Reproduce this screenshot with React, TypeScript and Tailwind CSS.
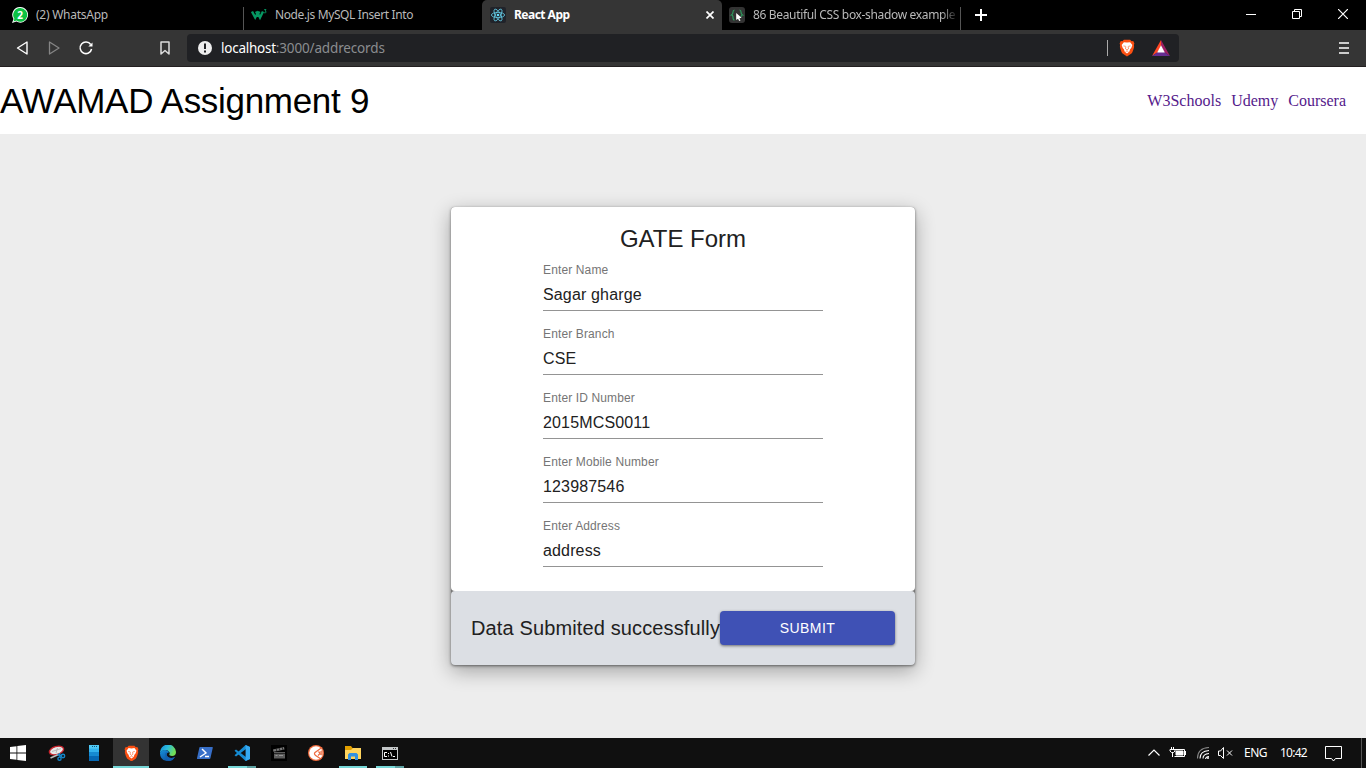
import type { ReactNode } from "react";
import { useState } from "react";

const ui = "font-['Noto_Sans',sans-serif]";
const sans = "font-['Liberation_Sans',Arial,sans-serif]";

function WhatsAppIcon() {
  return (
    <svg width="16" height="16" viewBox="0 0 16 16" className="shrink-0">
      <path d="M8.200 0A7.800 7.800 0 1 1 4.400 14.600L0 16L1.500 12A7.800 7.800 0 0 1 8.200 0Z" fill="#fff" />
      <path d="M8.200 1A6.900 6.900 0 1 1 4.500 13.600L1.500 14.500L2.400 11.800A6.900 6.900 0 0 1 8.200 1Z" fill="#0cc143" />
      <text x="8.200" y="11.700" fontSize="10" fontWeight="700" fill="#fff" textAnchor="middle" fontFamily="Noto Sans">2</text>
    </svg>
  );
}

function W3Icon() {
  return (
    <svg width="16" height="16" viewBox="0 0 16 16" fill="none" stroke="#059862" className="shrink-0">
      <path d="M1 4.500L4.200 10.500L6.700 6L9 10.500L12 4.500M5 4.500L6.700 7.500L8.500 4.500" strokeWidth="2.400" />
      <path d="M13.200 2.500H15L14 4Q15.300 4 15 5.200T13.100 5.700" strokeWidth=".9" />
    </svg>
  );
}

function ReactIcon() {
  return (
    <svg width="16" height="16" viewBox="0 0 16 16" className="shrink-0">
      <rect width="16" height="16" rx="2" fill="#20232a" />
      <g fill="none" stroke="#61c5de" strokeWidth=".85">
        <ellipse cx="8" cy="8" rx="6.600" ry="2.600" />
        <ellipse cx="8" cy="8" rx="6.600" ry="2.600" transform="rotate(60 8 8)" />
        <ellipse cx="8" cy="8" rx="6.600" ry="2.600" transform="rotate(120 8 8)" />
      </g>
      <circle cx="8" cy="8" r="1.300" fill="#61dafb" />
    </svg>
  );
}

function CssScanIcon() {
  return (
    <svg width="16" height="16" viewBox="0 0 16 16" className="shrink-0">
      <rect width="16" height="16" rx="3" fill="#333" />
      <path d="M5.500 3Q4 3 4 5T2.500 8Q4 8 4 10.500T5.500 13M10.500 3Q12 3 12 5T13.500 8Q12 8 12 10" fill="none" stroke="#2d9a5c" strokeWidth="1.200" />
      <path d="M7.200 6V13L9 11.700L10.200 14L11.500 13.400L10.400 11.200L12.600 10.800Z" fill="#fff" />
    </svg>
  );
}

function BraveIcon({ size }: { size: number }) {
  return (
    <svg width={size} height={size * 1.12} viewBox="0 0 18 20" className="shrink-0">
      <path d="M5.500 .8H12.500L14.200 2.500L16 2.300L17.300 5L16.800 6.500L17 9Q15.500 15 14 16.300L9 19.700L4 16.300Q2.500 15 1 9L1.200 6.500L.7 5L2 2.300L3.800 2.500Z" fill="#fb4f12" />
      <path d="M9 4L12.500 3.500L15 6.800L13.800 10L12.500 11.500L11.700 14L9 16.200L6.300 14L5.500 11.500L4.200 10L3 6.800L5.500 3.500Z" fill="#fff" />
      <path d="M5 7.700L7.500 8.200M13 7.700L10.500 8.200M7.700 8.500L7.300 11L9 12.300L10.700 11L10.300 8.500M7.500 14L9 13.300L10.500 14" fill="none" stroke="#fb4f12" strokeOpacity=".75" strokeWidth=".9" />
    </svg>
  );
}

function BatIcon() {
  return (
    <svg width="18" height="16" viewBox="0 0 18 16" className="shrink-0">
      <path d="M9 0L0 16L6 12L9 6Z" fill="#ff4724" />
      <path d="M9 0L18 16L12 12L9 6Z" fill="#9e1f63" />
      <path d="M0 16H18L12 12H6Z" fill="#662d91" />
      <path d="M9 5.300L12.800 12.500H5.200Z" fill="#fff" />
    </svg>
  );
}

function WindowsIcon() {
  return (
    <svg width="16" height="16" viewBox="0 0 16 16" fill="#fff">
      <path d="M0 2.100L6.500 1.200V7.500H0ZM7.300 1.100L16 0V7.500H7.300ZM0 8.400H6.500V14.800L0 13.900ZM7.300 8.400H16V16L7.300 14.900Z" />
    </svg>
  );
}

function SnipIcon() {
  return (
    <svg width="18" height="16" viewBox="0 0 18 16">
      <ellipse cx="8.500" cy="5.500" rx="7.300" ry="4" transform="rotate(-16 8.500 5.500)" fill="#e8e8e8" stroke="#c9242d" strokeWidth="1.400" />
      <path d="M4 6.500L13 3.600M9.500 3L8 8" stroke="#a5a5a5" strokeWidth=".7" />
      <path d="M2.500 13L10.500 9.500" stroke="#bbb" strokeWidth="1.500" />
      <g fill="none" stroke="#1684c7" strokeWidth="1.400">
        <path d="M9.500 9.500L14 11M11.500 8L12 12" />
        <circle cx="15" cy="11" r="1.700" /><circle cx="11.500" cy="13.700" r="1.600" />
      </g>
    </svg>
  );
}

function PhoneIcon() {
  return (
    <svg width="10" height="16" viewBox="0 0 10 16">
      <path d="M0 0H10V5H0Z" fill="#50c9f4" /><path d="M0 3.500H10V7H0Z" fill="#32b2ed" />
      <path d="M0 7H10V11H0Z" fill="#168bd2" /><path d="M0 11H10V16H0Z" fill="#0669b5" />
      <path d="M3 1.500H4M5 1.500H6M7 1.500H8" stroke="#075985" />
    </svg>
  );
}

function EdgeIcon() {
  return (
    <svg width="16" height="16" viewBox="0 0 16 16">
      <defs>
        <linearGradient id="edgeTop" x1="0" x2="1" y2=".4"><stop stopColor="#1686d9" /><stop offset=".5" stopColor="#2bbcdc" /><stop offset="1" stopColor="#72df55" /></linearGradient>
        <linearGradient id="edgeLow" x2=".7" y2="1"><stop stopColor="#1691db" /><stop offset="1" stopColor="#0c4c9b" /></linearGradient>
      </defs>
      <path d="M0 8A8 8 0 0 1 16 7Q16 11 12 11Q9 11 9.200 9.700Q10 8.700 9.500 7.200Q8 4.800 4.800 5Q1.500 5.300 0 8Z" fill="url(#edgeTop)" />
      <path d="M0 8Q1.500 4.800 5.300 5Q8.500 5.200 9.200 7.200Q6.500 7.500 6.700 10Q8 13.500 12 13Q14 12.700 15 12A8 8 0 0 1 0 8Z" fill="url(#edgeLow)" />
      <path d="M5.500 8Q4.200 12.500 8.500 15.800Q13 15.500 15 12Q11 14.200 8 12Q5.800 10.500 7 7.500Q6 7.200 5.500 8Z" fill="#135eaf" />
    </svg>
  );
}

function PowerShellIcon() {
  return (
    <svg width="16" height="12" viewBox="0 0 16 12">
      <path d="M3 0H15.300Q16 0 15.800 .8L13.400 11.200Q13.200 12 12.500 12H.5Q-.2 12 0 11.200L2.400 .6Q2.500 0 3 0Z" fill="#376fc8" />
      <path d="M5 2L9 6L3 10M8 9.500H12" fill="none" stroke="#fff" strokeWidth="1.400" />
    </svg>
  );
}

function CodeIcon() {
  return (
    <svg width="16" height="16" viewBox="0 0 16 16">
      <path d="M11.600 0L16 2V14L11.600 16L.5 5.800L2 4.500L12 12V4L2 11.500L.5 10.200Z" fill="#168bd2" />
      <path d="M11.600 0L16 2V14L11.600 16Z" fill="#35a9f1" />
    </svg>
  );
}

function ClapperIcon() {
  return (
    <svg width="16" height="16" viewBox="0 0 16 16">
      <path d="M0 0H16V16H0Z" fill="#000" />
      <path d="M2 4.500L13 2L13.500 4.500L2.500 6.800Z" fill="#777" />
      <path d="M3 7H14V13.500H3Z" fill="#5c5c5c" />
      <path d="M5 3.500L6 6.500M8 3L9 5.500M11 2L12 5M3 8.500H14" stroke="#191919" strokeWidth=".8" />
      <path d="M4.500 10.500H6.500M8 10.500H12" stroke="#999" strokeWidth=".9" />
    </svg>
  );
}

function BallIcon() {
  return (
    <svg width="16" height="16" viewBox="0 0 16 16">
      <circle cx="8" cy="8" r="8" fill="#ef6b3d" /><circle cx="8" cy="8" r="6.800" fill="#fff" />
      <path d="M14 2.500L7 7.500Q5.500 9 8 10.700L13 14M10.500 6.500L12.200 8.500L10 10.500" fill="none" stroke="#ed6a3e" strokeWidth="1.200" />
      <path d="M12.300 6L14.800 5V10.500L12 10Z" fill="#ef8b69" />
    </svg>
  );
}

function FolderIcon() {
  return (
    <svg width="16" height="14" viewBox="0 0 16 14">
      <path d="M0 0H6L7.500 2H16V13H0Z" fill="#e3a000" /><path d="M0 4H6L8 2H16V13H0Z" fill="#ffd45d" />
      <path d="M3 14V8.500L4.500 7H11.500L13 8.500V14H10V10.500H6V14Z" fill="#3291e2" />
    </svg>
  );
}

function TerminalIcon() {
  return (
    <svg width="16" height="13" viewBox="0 0 16 13">
      <path d="M0 0H16V13H0Z" fill="#c4c7c9" /><path d="M1 3H15V12H1Z" fill="#000" />
      <path d="M11 1.500H12M13 1.500H14" stroke="#333" />
      <path d="M5 5.500H2.500V9.500H5M6.500 6V7M6.500 8.500V9.500M8.500 5L10 9.500M11 9.500H13" fill="none" stroke="#fff" />
    </svg>
  );
}

type Tab = { title: string; width: string; icon: ReactNode; active?: boolean; tracking: string };

const tabs: Tab[] = [
  { title: "(2) WhatsApp", width: "w-[243px] pl-3", icon: <WhatsAppIcon />, tracking: "tracking-[-0.25px]" },
  { title: "Node.js MySQL Insert Into", width: "w-[239px] pl-2", icon: <W3Icon />, tracking: "tracking-[-0.38px]" },
  { title: "React App", width: "w-[240px] pl-2", icon: <ReactIcon />, active: true, tracking: "tracking-[-0.52px]" },
  { title: "86 Beautiful CSS box-shadow example", width: "w-[239px] pl-[7px]", icon: <CssScanIcon />, tracking: "tracking-[-0.34px]" },
];

function TabStrip() {
  return (
    <div className="flex h-[30px] bg-black text-xs">
      {tabs.map((tab, i) => (
        <div
          key={tab.title}
          className={`flex items-center ${tab.width} ${tab.active ? "rounded-t-[5px] bg-[#353535] font-bold text-white" : "text-[#b9b9b9]"}`}
        >
          {tab.icon}
          <span className={`ml-2 whitespace-nowrap leading-5 ${tab.tracking} ${i === 3 ? "w-[204px] [mask-image:linear-gradient(to_right,black_188px,transparent_206px)]" : ""}`}>
            {tab.title}
          </span>
          {i === 0 && <span className="ml-auto mt-[7px] h-[23px] w-px translate-x-px bg-[#555]" />}
          {i === 3 && <span className="ml-auto mt-[7px] h-[23px] w-px bg-[#555]" />}
          {tab.active && (
            <svg width="8" height="8" viewBox="0 0 8 8" className="ml-auto mr-2" stroke="#fff" strokeWidth="1.700">
              <path d="M.5 .5L7.500 7.500M7.500 .5L.5 7.500" />
            </svg>
          )}
        </div>
      ))}
      <div className="flex w-10 items-center justify-center">
        <svg width="12" height="12" viewBox="0 0 12 12" stroke="#fff" strokeWidth="2"><path d="M6 0V12M0 6H12" /></svg>
      </div>
      <div className="ml-auto flex h-7 w-[138px] items-center">
        <div className="flex flex-1 justify-center"><svg width="10" height="10" stroke="#fff"><path d="M0 5.500H10" /></svg></div>
        <div className="flex flex-1 justify-center"><svg width="10" height="10" fill="none" stroke="#fff"><path d="M.5 2.500H7.500V9.500H.5ZM2.500 2.500V.5H9.500V7.500H7.500" /></svg></div>
        <div className="flex flex-1 justify-center"><svg width="10" height="10" stroke="#fff" strokeWidth="1.200"><path d="M0 0L10 10M10 0L0 10" /></svg></div>
      </div>
    </div>
  );
}

function Toolbar() {
  return (
    <div className="flex h-[37px] items-center border-b border-[#231f20] bg-[#353535]">
      <svg width="187" height="20" viewBox="0 0 187 20" fill="none" strokeLinejoin="round">
        <path d="M27 4V16L17.500 10Z" stroke="#fff" strokeWidth="1.400" />
        <path d="M49.500 4V16L59 10Z" stroke="#858585" strokeWidth="1.300" />
        <path d="M90.700 6.500A5.800 5.800 0 1 0 91.600 11" stroke="#fff" strokeWidth="1.500" />
        <path d="M92.500 4.500V8.500H88.300Z" fill="#fff" />
        <path d="M161 4H169V16L165 12.500L161 16Z" stroke="#ddd" strokeWidth="1.500" />
      </svg>
      <div className="flex h-7 w-[992px] items-center rounded bg-[#202124] pl-[11px] pr-[9px]">
        <svg width="14" height="14" viewBox="0 0 14 14"><circle cx="7" cy="7" r="7" fill="#eee" /><path d="M6 2.500H8V8H6ZM6 9.500H8V11.500H6Z" fill="#202124" /></svg>
        <div className="ml-[9px] text-[13.500px] leading-5 tracking-[-0.15px] text-[#8b8d90]">
          <span className="tracking-[-0.25px] text-white">localhost</span>:3000/addrecords
        </div>
        <div className="ml-auto flex items-center">
          <span className="mr-[11px] h-4 w-px bg-[#aaa]" />
          <BraveIcon size={16} />
          <span className="w-[17px]" />
          <BatIcon />
        </div>
      </div>
      <svg width="10" height="12" viewBox="0 0 10 12" className="ml-auto mr-[17px]" stroke="#ccc" strokeWidth="2"><path d="M0 1H10M0 6H10M0 11H10" /></svg>
    </div>
  );
}

const fields = [
  { label: "Enter Name", value: "Sagar gharge" },
  { label: "Enter Branch", value: "CSE" },
  { label: "Enter ID Number", value: "2015MCS0011" },
  { label: "Enter Mobile Number", value: "123987546" },
  { label: "Enter Address", value: "address" },
];

function Field({ label, value }: { label: string; value: string }) {
  const [text, setText] = useState(value);
  return (
    <label className="mb-4 block h-12">
      <span className="block h-4 pt-px text-[12px] leading-3 tracking-[0.13px] text-[#757575]">{label}</span>
      <input
        value={text}
        onChange={(e) => setText(e.target.value)}
        className="block h-8 w-full border-b border-[#949494] pt-[3px] pb-[2px] text-base leading-5 tracking-[0.15px] text-[#212121] outline-none"
      />
    </label>
  );
}

function Page() {
  return (
    <div className={`flex h-[671px] flex-col bg-[#ededed] ${sans}`}>
      <header className="flex h-[67px] items-center justify-between bg-white">
        <h1 className="pb-px text-[35px] leading-[65px] tracking-[-0.3px] text-black">AWAMAD Assignment 9</h1>
        <nav className="mr-5 flex gap-[10px] font-['Liberation_Serif',serif] text-base text-[#551a8b]">
          <a>W3Schools</a><a>Udemy</a><a>Coursera</a>
        </nav>
      </header>
      <main className="mx-auto mt-[73px] w-[464px] rounded bg-[#777] shadow-[0_6px_20px_rgba(0,0,0,0.32),0_1px_3px_rgba(0,0,0,0.5)]">
        <section className="h-96 rounded bg-white px-[92px] pt-4">
          <h2 className="mb-2 text-center text-2xl leading-8 text-[#212121]">GATE Form</h2>
          {fields.map((field) => <Field key={field.label} {...field} />)}
        </section>
        <section className="flex h-[74px] items-center rounded bg-[#dcdfe4] px-5">
          <p className="w-[249px] shrink-0 whitespace-nowrap text-xl leading-8 tracking-[0.13px] text-[#212121]">Data Submited successfully</p>
          <button className="h-[34px] flex-1 rounded bg-[#3f51b5] text-sm tracking-[0.4px] text-white shadow-[0_1px_3px_rgba(0,0,0,0.5)]">SUBMIT</button>
        </section>
      </main>
    </div>
  );
}

type TaskItem = { name: string; icon: ReactNode; bar?: string; active?: boolean };

const tasks: TaskItem[] = [
  { name: "start", icon: <WindowsIcon /> },
  { name: "snip", icon: <SnipIcon /> },
  { name: "phone", icon: <PhoneIcon /> },
  { name: "brave", icon: <BraveIcon size={15} />, active: true, bar: "w-9" },
  { name: "edge", icon: <EdgeIcon /> },
  { name: "powershell", icon: <PowerShellIcon /> },
  { name: "code", icon: <CodeIcon />, bar: "w-7 border-r-[9px] border-[#5da1a2]" },
  { name: "clapper", icon: <ClapperIcon /> },
  { name: "ball", icon: <BallIcon /> },
  { name: "files", icon: <FolderIcon />, bar: "w-7" },
  { name: "terminal", icon: <TerminalIcon />, bar: "w-7 border-r-[9px] border-[#5da1a2]" },
];

function Taskbar() {
  return (
    <footer className="flex h-[30px] bg-[#101010] text-[12px] text-white">
      <div className="flex gap-px pl-px">
        {tasks.map((task, i) => (
          <div key={task.name} className={`flex w-9 flex-col items-center ${i === 0 ? "-ml-px mr-[2px]" : ""} ${task.active ? "bg-[#333]" : ""}`}>
            <div className="flex h-7 items-center pt-[2px]">{task.icon}</div>
            {task.bar && <span className={`h-[2px] bg-[#76d7d7] ${task.bar}`} />}
          </div>
        ))}
      </div>
      <div className="ml-auto flex items-center">
        <svg width="86" height="20" viewBox="0 0 86 20" fill="none" stroke="#fff">
          <path d="M.5 12.500L6 7L11.500 12.500" strokeWidth="1.200" />
          <path d="M26.500 6.500H36.500V13.500H26.500M37.500 8V12" />
          <path d="M28 8H35V12H28Z" fill="#fff" />
          <path d="M23.500 4V7M25.500 4V7M22 6.500H27V8L25.500 9.500H23.500L22 8ZM24.500 9.500V14" />
          <g strokeWidth="1.100">
            <path d="M49.500 15.500Q49.500 5 61 4.500" stroke="#888" />
            <path d="M52 15.500Q52 8 61 7.500M55 15.500Q55 11 61 10.500M57.500 16Q58 13.500 61 13.500" />
          </g>
          <circle cx="60" cy="15" r="1" fill="#fff" stroke="none" />
          <path d="M70.500 8H72.500L75.500 4.500V15.500L72.500 12.500H70.500ZM79 7.500L84 12.500M84 7.500L79 12.500" />
        </svg>
        <span className="ml-[10px] w-6 whitespace-nowrap tracking-[-0.5px]">ENG</span>
        <span className="ml-3 w-7 whitespace-nowrap tracking-[-0.75px]">10:42</span>
        <svg width="17" height="17" viewBox="0 0 17 17" className="ml-[17px] mr-[19px]" fill="none" stroke="#fff">
          <path d="M.5 1.500H16.500V13.500H10.500L8.500 16L6.500 13.500H.5Z" />
        </svg>
        <span className="mr-1 h-[30px] w-px bg-[#555]" />
      </div>
    </footer>
  );
}

export default function App() {
  return (
    <div className={`h-[768px] w-[1366px] overflow-hidden ${ui}`}>
      <TabStrip />
      <Toolbar />
      <Page />
      <Taskbar />
    </div>
  );
}
